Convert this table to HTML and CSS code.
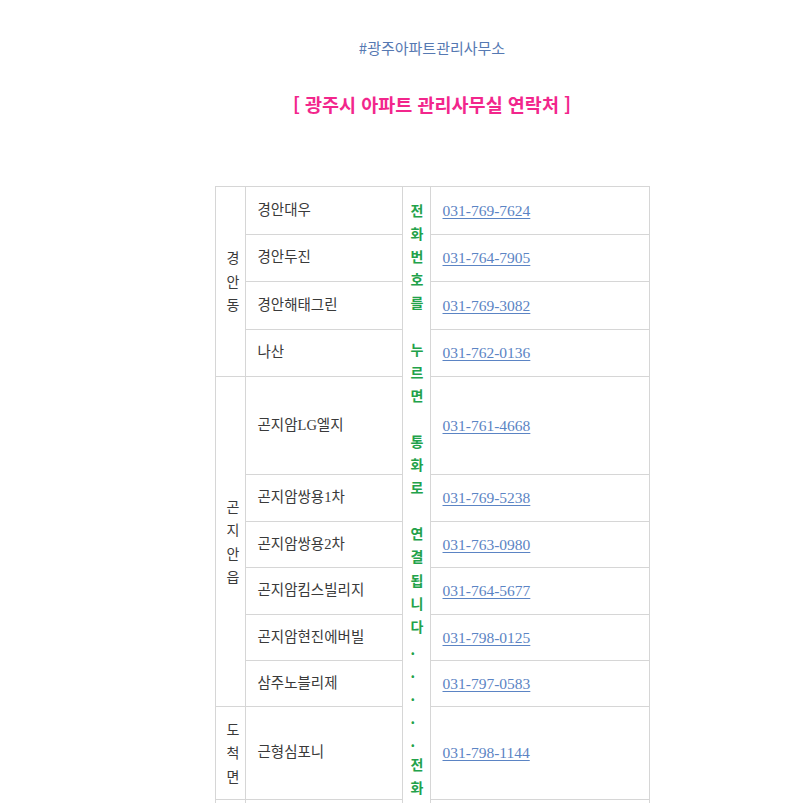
FILE: index.html
```html
<!DOCTYPE html>
<html lang="ko">
<head>
<meta charset="utf-8">
<title>광주시 아파트 관리사무실 연락처</title>
<link rel="stylesheet" href="styles.css">
</head>
<body>
<div class="page">
  <p class="tag">#광주아파트관리사무소</p>
  <h2 class="title">[ 광주시 아파트 관리사무실 연락처 ]</h2>
  <table class="contacts">
    <colgroup>
      <col class="c-region">
      <col class="c-name">
      <col class="c-note">
      <col class="c-phone">
    </colgroup>
    <tbody>
      <tr class="h48">
        <td class="region" rowspan="4">경<br>안<br>동</td>
        <td class="name">경안대우</td>
        <td class="note" rowspan="14">전<br>화<br>번<br>호<br>를<br>&nbsp;<br>누<br>르<br>면<br>&nbsp;<br>통<br>화<br>로<br>&nbsp;<br>연<br>결<br>됩<br>니<br>다<br>.<br>.<br>.<br>.<br>.<br>전<br>화<br>번<br>호<br>를<br>&nbsp;<br>누<br>르<br>면</td>
        <td class="phone"><a href="#">031-769-7624</a></td>
      </tr>
      <tr class="h47">
        <td class="name">경안두진</td>
        <td class="phone"><a href="#">031-764-7905</a></td>
      </tr>
      <tr class="h48">
        <td class="name">경안해태그린</td>
        <td class="phone"><a href="#">031-769-3082</a></td>
      </tr>
      <tr class="h47">
        <td class="name">나산</td>
        <td class="phone"><a href="#">031-762-0136</a></td>
      </tr>
      <tr class="h98">
        <td class="region" rowspan="6">곤<br>지<br>안<br>읍</td>
        <td class="name">곤지암LG엘지</td>
        <td class="phone"><a href="#">031-761-4668</a></td>
      </tr>
      <tr class="h47">
        <td class="name">곤지암쌍용1차</td>
        <td class="phone"><a href="#">031-769-5238</a></td>
      </tr>
      <tr class="h46">
        <td class="name">곤지암쌍용2차</td>
        <td class="phone"><a href="#">031-763-0980</a></td>
      </tr>
      <tr class="h47">
        <td class="name">곤지암킴스빌리지</td>
        <td class="phone"><a href="#">031-764-5677</a></td>
      </tr>
      <tr class="h46">
        <td class="name">곤지암현진에버빌</td>
        <td class="phone"><a href="#">031-798-0125</a></td>
      </tr>
      <tr class="h46">
        <td class="name">삼주노블리제</td>
        <td class="phone"><a href="#">031-797-0583</a></td>
      </tr>
      <tr class="h93">
        <td class="region">도<br>척<br>면</td>
        <td class="name">근형심포니</td>
        <td class="phone"><a href="#">031-798-1144</a></td>
      </tr>
      <tr class="h93">
        <td class="region" rowspan="3">오<br>포<br>읍</td>
        <td class="name">오포현대모닝사이드</td>
        <td class="phone"><a href="#">031-766-4460</a></td>
      </tr>
      <tr class="h48">
        <td class="name">오포e편한세상</td>
        <td class="phone"><a href="#">031-714-7723</a></td>
      </tr>
      <tr class="h48">
        <td class="name">오포자이</td>
        <td class="phone"><a href="#">031-726-2230</a></td>
      </tr>
    </tbody>
  </table>
</div>
</body>
</html>
```

FILE: styles.css
```css
html, body {
  margin: 0;
  padding: 0;
  background: #ffffff;
}

body {
  font-family: "Noto Sans CJK KR", "Liberation Sans", sans-serif;
  color: #3a3a3a;
}

.page {
  margin-left: 64px;
  padding-top: 36px;
  padding-bottom: 40px;
}

.tag {
  margin: 0;
  text-align: center;
  font-size: 15px;
  line-height: 24px;
  color: #5679b2;
}

.title {
  margin: 30px 0 0;
  text-align: center;
  font-size: 18.5px;
  line-height: 28px;
  font-weight: 700;
  color: #f2268c;
}

.contacts {
  margin: 68px auto 0;
  border-collapse: collapse;
  table-layout: fixed;
  width: 434px;
  font-size: 14px;
  line-height: 23.1px;
}

.c-region { width: 30px; }
.c-name { width: 157px; }
.c-note { width: 28px; }
.c-phone { width: 219px; }

.contacts td {
  border: 1px solid #d6d6d6;
  padding: 0;
  vertical-align: middle;
}

.h46 { height: 46px; }
.h47 { height: 47px; }
.h48 { height: 48px; }
.h93 { height: 93px; }
.h98 { height: 98px; }

.contacts .region {
  padding-left: 11px;
  color: #3a3a3a;
  line-height: 23.4px;
}

.contacts .name {
  padding-left: 12px;
  font-family: "Liberation Serif", "Noto Sans CJK KR", serif;
  font-size: 14.5px;
  color: #3a3a3a;
}

.contacts .note {
  vertical-align: top;
  padding: 12px 0 0 8px;
  color: #22a24a;
  font-weight: 700;
  line-height: 23.1px;
}

.contacts .phone {
  padding-left: 12px;
}

.phone a {
  font-family: "Liberation Serif", serif;
  font-size: 15.5px;
  color: #5b84c4;
  text-decoration: underline;
  text-underline-offset: 2px;
}
```
